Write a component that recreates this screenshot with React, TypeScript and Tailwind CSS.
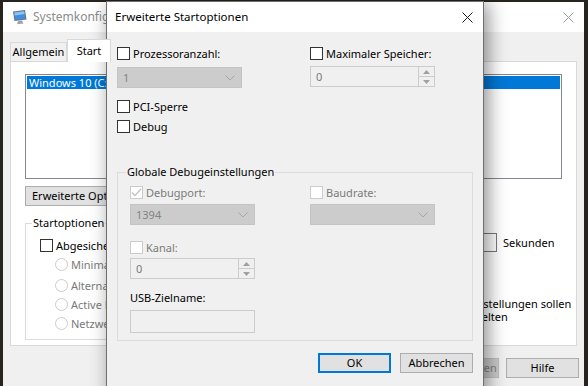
import type { ReactNode } from "react";

const ui = "font-['Noto_Sans',sans-serif] text-[11px] leading-[16px]";

const Box = ({ checked = false, disabled = false }: { checked?: boolean; disabled?: boolean }) => (
  <span
    className={`flex h-[13px] w-[13px] shrink-0 items-center justify-center border bg-white ${
      disabled ? "border-[#cccccc]" : "border-[#333333]"
    }`}
  >
    {checked && (
      <svg width="11" height="9" viewBox="0 0 11 9">
        <path d="M1 4.5 L4 7.5 L10 1" fill="none" stroke="#c4c4c4" strokeWidth="1.3" />
      </svg>
    )}
  </span>
);

const Check = ({
  label,
  checked,
  disabled,
  className = "",
}: {
  label: string;
  checked?: boolean;
  disabled?: boolean;
  className?: string;
}) => (
  <div className={`flex h-[13px] items-center gap-[3px] ${className}`}>
    <Box checked={checked} disabled={disabled} />
    <span className={`whitespace-nowrap ${disabled ? "text-[#7a7a7a]" : "text-black"}`}>{label}</span>
  </div>
);

const Radio = ({ label, className = "" }: { label: string; className?: string }) => (
  <div className={`flex h-[13px] items-center gap-[3px] ${className}`}>
    <span className="h-[13px] w-[13px] shrink-0 rounded-full border border-[#cccccc] bg-white" />
    <span className="whitespace-nowrap text-[#7a7a7a]">{label}</span>
  </div>
);

const Select = ({ value = "", className = "" }: { value?: string; className?: string }) => (
  <div className={`flex h-[21px] w-[125px] items-center justify-between border border-[#c4c4c4] bg-[#cccccc] pl-[5px] pr-[6px] ${className}`}>
    <span className="text-[#838383]">{value}</span>
    <svg width="10" height="6" viewBox="0 0 10 6">
      <path d="M0.5 0.5 L5 5 L9.5 0.5" fill="none" stroke="#a6a6a6" strokeWidth="1" />
    </svg>
  </div>
);

const Spin = ({ value, className = "" }: { value: string; className?: string }) => (
  <div className={`flex h-[21px] w-[125px] border border-[#cccccc] bg-[#f0f0f0] ${className}`}>
    <span className="flex flex-1 items-center pl-[5px] text-[#7a7a7a]">{value}</span>
    <div className="flex w-[16px] flex-col border-l border-[#cccccc]">
      <div className="flex flex-1 items-center justify-center border-b border-[#cccccc]">
        <svg width="7" height="4" viewBox="0 0 7 4">
          <path d="M0 4 L3.5 0 L7 4 Z" fill="#a0a0a0" />
        </svg>
      </div>
      <div className="flex flex-1 items-center justify-center">
        <svg width="7" height="4" viewBox="0 0 7 4">
          <path d="M0 0 L3.5 4 L7 0 Z" fill="#a0a0a0" />
        </svg>
      </div>
    </div>
  </div>
);

const Button = ({
  children,
  variant = "normal",
  className = "",
}: {
  children: ReactNode;
  variant?: "normal" | "default" | "disabled";
  className?: string;
}) => {
  const look =
    variant === "default"
      ? "border-2 border-[#0078d7] bg-[#e1e1e1] text-black"
      : variant === "disabled"
      ? "border border-[#bfbfbf] bg-[#cccccc] text-[#838383]"
      : "border border-[#adadad] bg-[#e1e1e1] text-black";
  return (
    <div className={`flex h-[20px] w-[73px] shrink-0 items-center justify-center whitespace-nowrap ${look} ${className}`}>
      {children}
    </div>
  );
};

const CloseX = ({ color }: { color: string }) => (
  <svg width="11" height="11" viewBox="0 0 11 11">
    <path d="M0.5 0.5 L10.5 10.5 M10.5 0.5 L0.5 10.5" stroke={color} strokeWidth="1" />
  </svg>
);

const MonitorIcon = () => (
  <svg width="16" height="16" viewBox="0 0 16 16">
    <path d="M1 2.5 L13 1 L14.5 10.5 L2.5 12 Z" fill="#6b7480" />
    <path d="M2.3 3.4 L12.2 2.2 L13.3 9.6 L3.4 10.8 Z" fill="#3d8fe0" />
    <path d="M2.3 3.4 L12.2 2.2 L12.6 5 L2.8 6.5 Z" fill="#8cc4f5" />
    <path d="M6 12 L10 11.5 L11.5 14.5 L5 15.3 Z" fill="#9aa2ab" />
  </svg>
);

const BackgroundWindow = () => (
  <div className="absolute left-[3px] top-[2px] h-[400px] w-[581px] bg-[#f0f0f0]">
    <div className="flex h-[30px] items-center bg-white pl-[9px] pr-[10px]">
      <MonitorIcon />
      <span className="ml-[5px] text-[12px] text-[#8c8c8c]">Systemkonfiguration</span>
      <span className="ml-auto">
        <CloseX color="#9a9a9a" />
      </span>
    </div>
    <div className="px-[7px] pt-[7px]">
      <div className="flex h-[22px] items-end">
        <div className="flex h-[19px] w-[57px] items-center justify-center border border-b-0 border-[#d9d9d9] bg-[#f0f0f0]">
          Allgemein
        </div>
        <div className="relative z-10 -mb-px flex h-[23px] w-[44px] items-center justify-center border border-b-0 border-[#d9d9d9] bg-white">
          Start
        </div>
      </div>
      <div className="h-[285px] border border-[#d9d9d9] bg-white px-[14px] pt-[12px]">
        <div className="h-[105px] border border-[#828790] p-[1px]">
          <div className="flex h-[13px] items-center whitespace-nowrap bg-[#0078d7] pl-[2px] text-white">
            Windows 10 (C:\Windows) : Aktuelles Betriebssystem
          </div>
        </div>
        <div className="mt-[7px] flex">
          <Button className="w-[130px] justify-start pl-[6px]">Erweiterte Optionen...</Button>
        </div>
        <div className="mt-[9px] flex">
          <fieldset className="w-[300px] shrink-0 border border-[#dcdcdc] pb-[9px]">
            <legend className="ml-[6px] px-[1px]">Startoptionen</legend>
            <div className="pl-[14px]">
              <Check className="mt-[8px]" label="Abgesicherter Start" />
              <div className="pl-[15px]">
                <Radio className="mt-[6px]" label="Minimal" />
                <Radio className="mt-[8px]" label="Alternative Shell" />
                <Radio className="mt-[6px]" label="Active Directory-Reparatur" />
                <Radio className="mt-[6px]" label="Netzwerk" />
              </div>
            </div>
          </fieldset>
          <div className="flex min-w-0 flex-1 flex-col">
            <div className="mt-[18px] flex items-center pl-[20px]">
              <span className="w-[95px] shrink-0">Timeout:</span>
              <div className="h-[19px] w-[57px] shrink-0 border border-[#7a7a7a] bg-white" />
              <span className="ml-[6px]">Sekunden</span>
            </div>
            <div className="ml-[80px] mt-[45px] flex items-start gap-[3px]">
              <span className="mt-px">
                <Box />
              </span>
              <span className="whitespace-nowrap leading-[13px]">
                Alle Starteinstellungen sollen
                <br />
                dauerhaft gelten
              </span>
            </div>
          </div>
        </div>
      </div>
      <div className="-mr-[2px] mt-[12px] flex justify-end gap-[7px]">
        <Button variant="disabled">Übernehmen</Button>
        <Button>Hilfe</Button>
      </div>
    </div>
  </div>
);

const Dialog = () => (
  <div className="absolute left-[106px] top-[1px] h-[400px] w-[378px] border border-[#6f6f6f] bg-[#f0f0f0] shadow-[4px_2px_18px_rgba(0,0,0,0.45)]">
    <div className="flex h-[30px] items-center bg-white pl-[8px] pr-[10px]">
      <span className="text-[11.5px] text-black">Erweiterte Startoptionen</span>
      <span className="ml-auto">
        <CloseX color="#1a1a1a" />
      </span>
    </div>
    <div className="flex flex-col px-[10px]">
      <div className="mt-[15px] flex">
        <div className="w-[193px]">
          <Check label="Prozessoranzahl:" />
          <Select className="mt-[7px]" value="1" />
          <Check className="mt-[12px]" label="PCI-Sperre" />
          <Check className="mt-[7px]" label="Debug" />
        </div>
        <div>
          <Check label="Maximaler Speicher:" />
          <Spin className="mt-[6px]" value="0" />
        </div>
      </div>
      <fieldset className="mt-[31px] border border-[#dcdcdc] pb-[7px]">
        <legend className="ml-[8px] px-[1px] text-black">Globale Debugeinstellungen</legend>
        <div className="pl-[12px]">
          <div className="mt-[6px] flex">
            <div className="w-[180px]">
              <Check label="Debugport:" checked disabled />
              <Select className="mt-[5px]" value="1394" />
              <Check className="mt-[16px]" label="Kanal:" disabled />
              <Spin className="mt-[4px]" value="0" />
            </div>
            <div>
              <Check label="Baudrate:" disabled />
              <Select className="mt-[5px]" />
            </div>
          </div>
          <div className="mt-[11px] text-black">USB-Zielname:</div>
          <div className="mt-[4px] h-[23px] w-[125px] border border-[#cccccc] bg-[#f0f0f0]" />
        </div>
      </fieldset>
      <div className="mt-[12px] flex justify-end gap-[9px]">
        <Button variant="default">OK</Button>
        <Button>Abbrechen</Button>
      </div>
    </div>
  </div>
);

export default function App() {
  return (
    <div className={`relative h-[386px] w-[588px] overflow-hidden bg-[#27231f] ${ui}`}>
      <BackgroundWindow />
      <Dialog />
    </div>
  );
}
